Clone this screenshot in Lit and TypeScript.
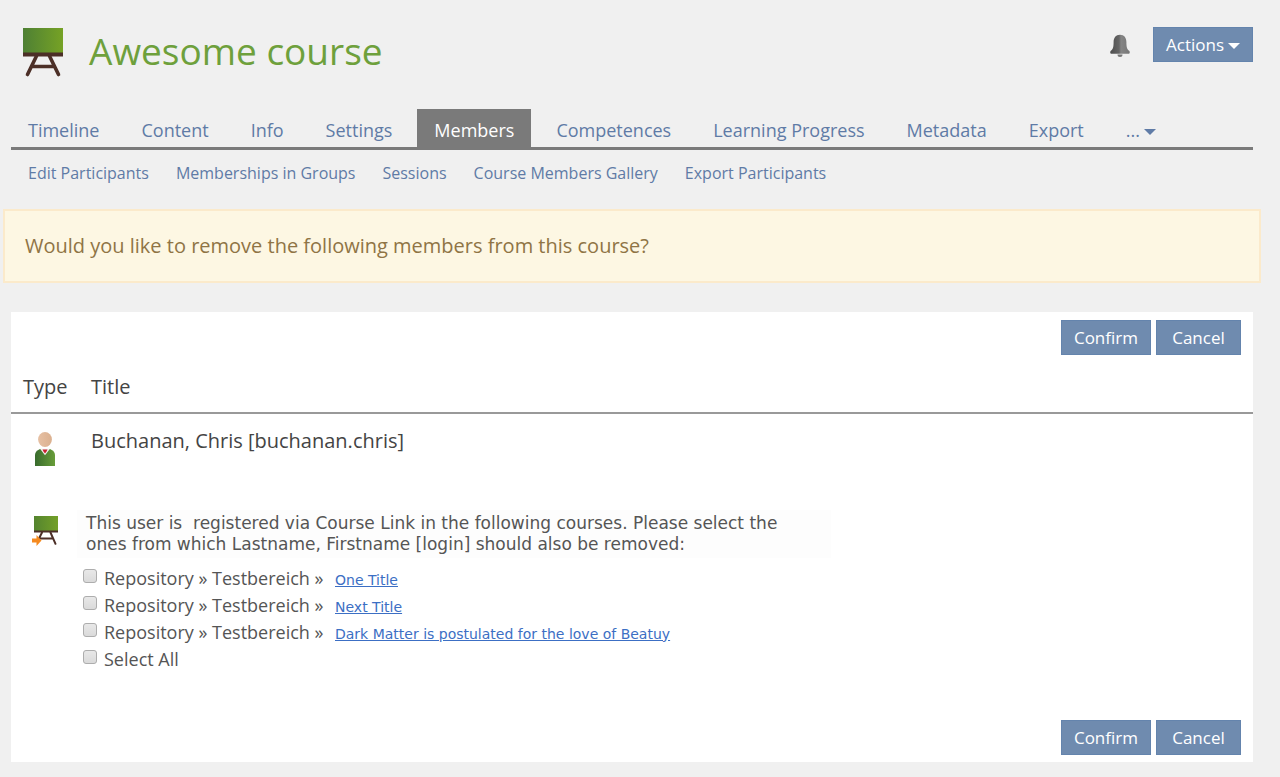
import { LitElement, html, css } from "lit";
import { customElement, property, state } from "lit/decorators.js";

@customElement("course-icon")
export class CourseIcon extends LitElement {
  @property({ type: Boolean }) linked = false;

  static styles = css`
    :host { display: block; }
    svg { display: block; width: 100%; height: auto; }
  `;

  render() {
    if (this.linked) {
      return html`<svg viewBox="0 0 28 32" aria-hidden="true">
        <defs>
          <linearGradient id="g" x1="0" x2="1" y1="0" y2="0">
            <stop offset="0" stop-color="#54842f" /><stop offset="1" stop-color="#73a028" />
          </linearGradient>
        </defs>
        <rect x="3" y="1" width="24" height="15" fill="url(#g)" />
        <rect x="3" y="15.5" width="24" height="2" fill="#4c2f27" />
        <path d="M11 17.500 8 23.500M19.500 17.500 24.500 28.800M9.500 23.500h12" stroke="#4c2f27" stroke-width="2" fill="none" stroke-linecap="round" />
        <path d="M1 23.500h4.500v-3.500l5 5.500-5 5.500v-3.500h-4.500z" fill="#f58a1f" />
      </svg>`;
    }
    return html`<svg viewBox="0 0 40 49" aria-hidden="true">
      <defs>
        <linearGradient id="g" x1="0" x2="1" y1="0" y2="0">
          <stop offset="0" stop-color="#4e8034" /><stop offset="1" stop-color="#76a225" />
        </linearGradient>
      </defs>
      <rect width="40" height="25" fill="url(#g)" />
      <rect y="24.5" width="40" height="4" fill="#4c2f27" />
      <path d="M13.500 28 4.500 46.500M26.500 28 35.500 46.500M8.500 38.500h23" stroke="#4c2f27" stroke-width="3.600" fill="none" stroke-linecap="round" />
    </svg>`;
  }
}

@customElement("user-icon")
export class UserIcon extends LitElement {
  static styles = css`
    :host { display: block; }
    svg { display: block; width: 100%; height: auto; }
  `;

  render() {
    return html`<svg viewBox="0 0 20 34" aria-hidden="true">
      <defs>
        <linearGradient id="coat" x1="0" x2="1" y1="0" y2="0">
          <stop offset="0" stop-color="#386b2d" /><stop offset="1" stop-color="#689d39" />
        </linearGradient>
        <linearGradient id="skin" x1="0" x2="1" y1="0" y2="0">
          <stop offset="0" stop-color="#e6c0a3" /><stop offset="1" stop-color="#dbb08f" />
        </linearGradient>
      </defs>
      <ellipse cx="10" cy="7.500" rx="6.900" ry="7.400" fill="url(#skin)" />
      <path d="M0 34V23q0-4 5-6h10q5 2 5 6v11z" fill="url(#coat)" />
      <path d="M5 16.700h10l-5 6.500z" fill="#f3f1ef" />
      <path d="M7.500 17.500h5l-1 2-1.500 2-1.500-2z" fill="#c8202f" />
    </svg>`;
  }
}

const TABS = ["Timeline", "Content", "Info", "Settings", "Members", "Competences", "Learning Progress", "Metadata", "Export"];
const SUBTABS = ["Edit Participants", "Memberships in Groups", "Sessions", "Course Members Gallery", "Export Participants"];
const COURSES = ["One Title", "Next Title", "Dark Matter is postulated for the love of Beatuy"];
const NOTE =
  "This user is  registered via Course Link in the following courses. Please select the ones from which Lastname, Firstname [login] should also be removed:";

@customElement("app-root")
export class AppRoot extends LitElement {
  @state() private selected: boolean[] = COURSES.map(() => false);

  static styles = css`
    :host {
      display: block;
      box-sizing: border-box;
      min-height: 100vh;
      padding: 27px 27px 15px 11px;
      background: #f0f0f0;
      color: #444;
      font: 20px/26px "Open Sans", sans-serif;
    }
    * { box-sizing: border-box; }
    a { color: #5f7ba6; text-decoration: none; }
    header { display: flex; align-items: flex-start; height: 82px; padding-left: 12px; }
    .logo { width: 40px; margin-top: 1px; }
    h1 { flex: 1; margin: 0 0 0 26px; color: #6ea03c; font-size: 37px; line-height: 48px; font-weight: 400; }
    .bell { width: 22px; height: 24px; margin: 7px 22px 0 0; padding: 0; border: 0; background: none; }
    .bell svg { display: block; }
    .btn {
      height: 35px;
      padding: 0 12px;
      border: 1px solid #6484ad;
      background: #6f8baf;
      color: #fff;
      font: 17px/24px "Open Sans", sans-serif;
      white-space: nowrap;
    }
    .bar .btn { min-width: 85px; }
    .caret {
      display: inline-block;
      margin-left: 4px;
      border: 6px solid transparent;
      border-top-color: currentColor;
      border-bottom: 0;
      vertical-align: 2px;
    }
    .tabs { display: flex; gap: 8px; border-bottom: 3px solid #7a7a7a; font-size: 18px; }
    .tab { padding: 8px 17px 4px; color: #5f7ba6; white-space: nowrap; }
    .tab.active { background: #7a7a7a; color: #fff; }
    .more { border: 0; background: none; font: inherit; }
    .subtabs { display: flex; gap: 27px; padding: 11px 17px 24px; font-size: 16px; line-height: 24px; }
    .alert {
      margin: 0 -8px 29px;
      padding: 22px 20px;
      border: 2px solid #fbeacb;
      background: #fdf7e3;
      color: #8f7445;
    }
    .panel { background: #fff; }
    .bar { display: flex; justify-content: flex-end; gap: 5px; padding: 8px 12px 7px; }
    table { width: 100%; border-collapse: collapse; }
    th { padding: 12px 14px; border-bottom: 2px solid #999; text-align: left; font-weight: 400; }
    th:first-child { width: 66px; padding: 12px 0 12px 12px; }
    td { padding: 14px; vertical-align: top; }
    td:first-child { padding: 14px 0 14px 12px; }
    .usericon { width: 20px; margin: 4px 0 19px 12px; }
    .linkicon { width: 28px; margin: 2px 0 0 8px; }
    td.linked { padding: 11px 0 40px; }
    .note {
      margin: 0;
      padding: 3px 31px 3px 9px;
      max-width: 754px;
      background: #fdfdfd;
      color: #555;
      font: 17px/21px "DejaVu Sans", sans-serif;
      white-space: pre-wrap;
    }
    ul { margin: 6px 0 0; padding: 0 0 0 6px; list-style: none; }
    li { display: flex; align-items: center; height: 27px; font-size: 18px; color: #555; }
    li label { width: 231px; white-space: nowrap; }
    li a { margin-top: 4px; color: #3c6fc4; font: 14px/20px "DejaVu Sans", sans-serif; text-decoration: underline; }
    input {
      appearance: none;
      flex: none;
      width: 14px;
      height: 14px;
      margin: 0 7px 4px 0;
      border: 1px solid #adadad;
      border-radius: 3px;
      background: linear-gradient(#e8e8e8, #dadada);
    }
    input:checked { background: #6f8baf; }
  `;

  private toggle(index: number) {
    this.selected = this.selected.map((on, i) => (i === index ? !on : on));
  }

  private toggleAll(event: Event) {
    const on = (event.target as HTMLInputElement).checked;
    this.selected = COURSES.map(() => on);
  }

  private bar() {
    return html`<div class="bar">
      <button class="btn">Confirm</button>
      <button class="btn">Cancel</button>
    </div>`;
  }

  render() {
    return html`
      <header>
        <course-icon class="logo"></course-icon>
        <h1>Awesome course</h1>
        <button class="bell" aria-label="Notifications">
          <svg width="22" height="24" viewBox="0 0 22 24">
            <defs>
              <linearGradient id="metal" x1="0" x2="1" y1="0" y2="0">
                <stop offset="0" stop-color="#4d4d4d" /><stop offset=".45" stop-color="#656565" /><stop offset=".55" stop-color="#858585" /><stop offset="1" stop-color="#777" />
              </linearGradient>
            </defs>
            <path d="M8.500 20.500h5q0 2.500-2.500 2.500t-2.500-2.500z" fill="#777" />
            <path d="M11 .8c-4.300 0-6.400 3.200-6.400 7.200 0 5.200-.6 7.200-2.800 8.800-.8.600-.8 3 .2 3h18c1 0 1-2.400.2-3-2.200-1.600-2.800-3.600-2.800-8.800 0-4-2.100-7.200-6.400-7.200z" fill="url(#metal)" />
          </svg>
        </button>
        <button class="btn">Actions<span class="caret"></span></button>
      </header>
      <nav class="tabs" aria-label="Course">
        ${TABS.map((t) => html`<a href="#" class="tab ${t === "Members" ? "active" : ""}">${t}</a>`)}
        <button class="tab more" aria-label="More tabs">...<span class="caret"></span></button>
      </nav>
      <nav class="subtabs" aria-label="Members">${SUBTABS.map((t) => html`<a href="#">${t}</a>`)}</nav>
      <div class="alert" role="alert">Would you like to remove the following members from this course?</div>
      <main class="panel">
        ${this.bar()}
        <table>
          <thead><tr><th>Type</th><th>Title</th></tr></thead>
          <tbody>
            <tr>
              <td><user-icon class="usericon"></user-icon></td>
              <td>Buchanan, Chris [buchanan.chris]</td>
            </tr>
            <tr>
              <td><course-icon class="linkicon" linked></course-icon></td>
              <td class="linked">
                <p class="note">${NOTE}</p>
                <ul>
                  ${COURSES.map((title, i) => html`<li>
                    <input type="checkbox" id="c${i}" .checked=${this.selected[i]} @change=${() => this.toggle(i)} />
                    <label for="c${i}">Repository » Testbereich »</label>
                    <a href="#">${title}</a>
                  </li>`)}
                  <li>
                    <input type="checkbox" id="all" .checked=${this.selected.every(Boolean)} @change=${this.toggleAll} />
                    <label for="all">Select All</label>
                  </li>
                </ul>
              </td>
            </tr>
          </tbody>
        </table>
        ${this.bar()}
      </main>
    `;
  }
}
